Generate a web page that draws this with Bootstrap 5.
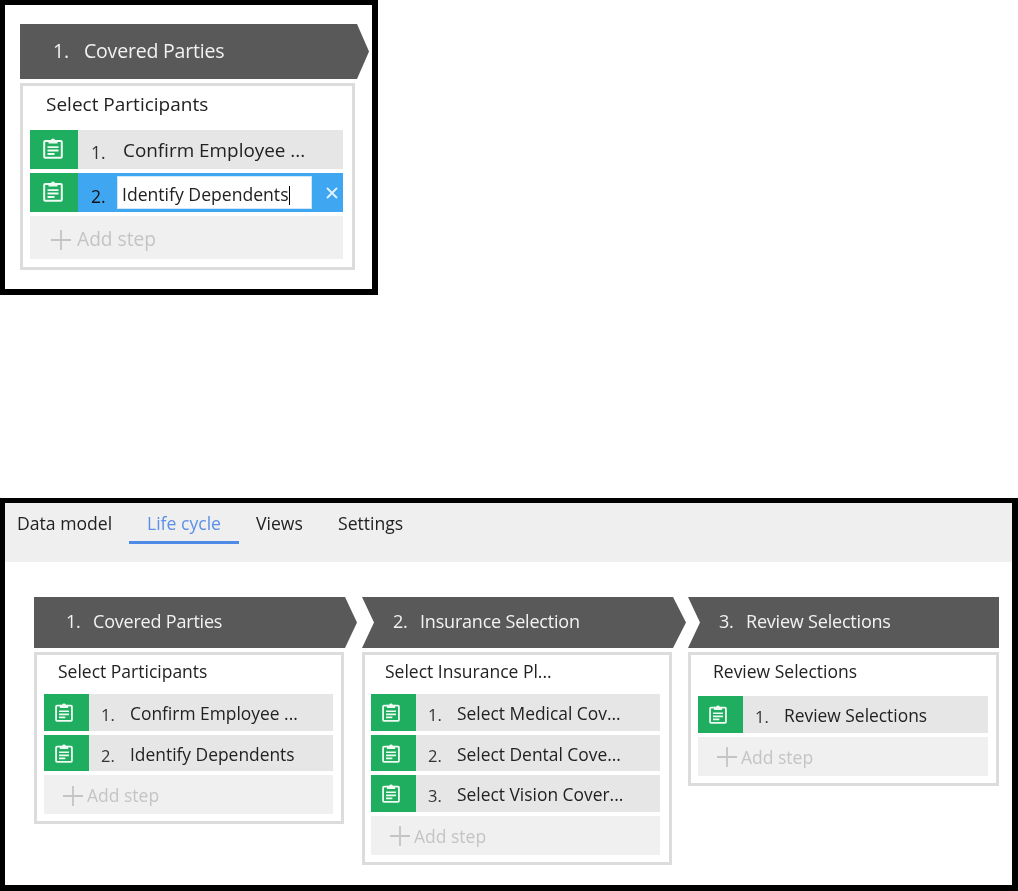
<!DOCTYPE html>
<html lang="en">
<head>
<meta charset="utf-8">
<title>Life cycle</title>
<link href="https://cdn.jsdelivr.net/npm/bootstrap@5.3.0/dist/css/bootstrap.min.css" rel="stylesheet">
<style>
html,body{margin:0;background:#fff;}
body{font-family:"Open Sans","Noto Sans",sans-serif;color:#222;width:1018px;height:891px;overflow:hidden;}
.shot{border-style:solid;border-color:#000;border-width:5px 6px 6px 5px;box-sizing:border-box;background:#fff;filter:blur(.35px);}
.shot-top{width:378px;height:295px;padding:19px 3px 0 15px;margin-bottom:203px;}
.shot-main{width:1018px;height:393px;}
.tabbar{height:59px;background:#efefef;padding-top:7px;padding-left:12px;font-size:17.6px;}
.tabitem{height:34px;line-height:26px;color:#222;}
.tab-a{width:112px;}
.tab-b{width:110px;color:#5b8fe8;border-bottom:3px solid #4f8be6;text-align:center;}
.tab-c{width:99px;padding-left:17px;}
.tab-d{padding-left:0;}
.canvas{padding:35px 0 0 29px;}
.stagecol{flex:none;}
.col-one{width:323px;margin-right:5px;}
.col-two{width:324px;margin-right:2px;}
.col-three{width:311px;}
.stage{height:51px;background:#595959;color:#f2f2f2;font-size:18px;letter-spacing:-.2px;padding-bottom:3px;}
.stage-first{clip-path:polygon(0 0,calc(100% - 12px) 0,100% 50%,calc(100% - 12px) 100%,0 100%);padding-left:32px;}
.stage-mid{clip-path:polygon(0 0,calc(100% - 13px) 0,100% 50%,calc(100% - 13px) 100%,0 100%,12px 50%);padding-left:31px;}
.stage-last{clip-path:polygon(0 0,100% 0,100% 100%,0 100%,12px 50%);padding-left:31px;}
.stage-num{width:27px;flex:none;}
.stepbox{width:310px;margin-top:4px;border:3px solid #dcdcdc;padding:0 8px 7px 7px;background:#fff;}
.col-two .stepbox{padding-left:6px;padding-right:9px;}
.col-three .stepbox{width:311px;}
.boxtitle{height:39px;padding-left:14px;font-size:17.5px;line-height:28px;padding-top:2px;}
.steprow{height:36.5px;background:#e6e6e6;margin-bottom:4px;font-size:17.4px;}
.stepicon{width:45px;flex:none;background:#1fae5f;padding-left:11px;padding-top:8px;}
.stepicon svg{width:18px;height:20px;display:block;}
.stepnum{width:29px;flex:none;margin-left:12px;padding-top:9px;font-size:16.5px;color:#333;line-height:24px;}
.steplabel{white-space:nowrap;padding-top:6px;line-height:26px;}
.addstep{height:39px;margin-top:1px;background:#f0f0f0;color:#c4c4c4;font-size:17.5px;padding-left:19px;padding-top:2px;}
.plusmark{width:20px;height:20px;margin-right:4px;flex:none;}
.third-title{height:41px;padding-left:15px;}
.shot-top .stage{height:55px;font-size:19.5px;width:349px;padding-left:33px;padding-bottom:2px;}
.shot-top .stage-num{width:31px;}
.shot-top .stepbox{width:335px;padding:0 9px 7px 7px;height:187px;}
.shot-top .boxtitle{height:44px;font-size:19px;line-height:30px;padding-left:16px;padding-top:3px;}
.shot-top .steprow{height:39px;font-size:18.9px;margin-bottom:4px;}
.shot-top .stepicon{width:48px;padding-left:13px;padding-top:7px;}
.shot-top .stepicon svg{width:20px;height:22px;}
.shot-top .stepnum{width:32px;margin-left:13px;font-size:17.5px;padding-top:10px;}
.shot-top .steplabel{padding-top:6px;line-height:28px;}
.shot-top .addstep{height:43px;margin-top:0;font-size:19.2px;padding-left:21px;padding-top:4px;}
.shot-top .plusmark{margin-right:6px;}
.steprow-edit{background:#3fa6f2!important;}
.shot-top .editnum{color:#111;width:26px;padding-top:11px;}
.editbox{width:195px;height:33px;background:#fff;border:1px solid #cfe6fb;font-size:17.6px;line-height:35px;padding-left:4px;margin-right:13px;flex:none;}
.caretbar{display:inline-block;width:1px;height:19px;background:#000;vertical-align:-4px;}
.closemark{width:14px;height:14px;flex:none;}
</style>
</head>
<body>
<svg width="0" height="0" class="d-block" aria-hidden="true"><defs>
<symbol id="clip" viewBox="0 0 20 22"><g fill="none" stroke="#eefaf2" stroke-width="2"><path d="M6.500 4H2.200a1 1 0 0 0-1 1v14.800a1 1 0 0 0 1 1h15.600a1 1 0 0 0 1-1V5a1 1 0 0 0-1-1h-4.300"/></g><path d="M5.500 6.500V3h2.400a2.200 2.200 0 0 1 4.200 0h2.400v3.500z" fill="#eefaf2"/><path d="M4.500 9.200h11v1.900h-11zM4.500 12.600h11v1.900h-11zM4.500 16h7v1.900h-7z" fill="#eefaf2"/></symbol>
<symbol id="plus" viewBox="0 0 20 20"><path d="M10 0v20M0 10h20" stroke="#c4c4c4" stroke-width="1.800" fill="none"/></symbol>
</defs></svg>

<div class="shot shot-top">
  <div class="stage stage-first d-flex align-items-center"><span class="stage-num">1.</span><span>Covered Parties</span></div>
  <div class="stepbox">
    <div class="boxtitle">Select Participants</div>
    <div class="steprow d-flex"><div class="stepicon"><svg><use href="#clip"/></svg></div><div class="stepnum">1.</div><div class="steplabel">Confirm Employee ...</div></div>
    <div class="steprow steprow-edit d-flex"><div class="stepicon"><svg><use href="#clip"/></svg></div><div class="stepnum editnum">2.</div><div class="align-self-center editbox">Identify Dependents<span class="caretbar"></span></div><svg class="closemark align-self-center" viewBox="0 0 14 14"><path d="M2 2l10 10M12 2L2 12" stroke="#e4f3fe" stroke-width="1.800"/></svg></div>
    <div class="addstep d-flex align-items-center"><svg class="plusmark"><use href="#plus"/></svg><span>Add step</span></div>
  </div>
</div>

<div class="shot shot-main">
  <div class="tabbar d-flex">
    <div class="tabitem tab-a">Data model</div>
    <div class="tabitem tab-b">Life cycle</div>
    <div class="tabitem tab-c">Views</div>
    <div class="tabitem tab-d">Settings</div>
  </div>
  <div class="canvas d-flex align-items-start">
    <div class="stagecol col-one">
      <div class="stage stage-first d-flex align-items-center"><span class="stage-num">1.</span><span>Covered Parties</span></div>
      <div class="stepbox">
        <div class="boxtitle">Select Participants</div>
        <div class="steprow d-flex"><div class="stepicon"><svg><use href="#clip"/></svg></div><div class="stepnum">1.</div><div class="steplabel">Confirm Employee ...</div></div>
        <div class="steprow d-flex"><div class="stepicon"><svg><use href="#clip"/></svg></div><div class="stepnum">2.</div><div class="steplabel">Identify Dependents</div></div>
        <div class="addstep d-flex align-items-center"><svg class="plusmark"><use href="#plus"/></svg><span>Add step</span></div>
      </div>
    </div>
    <div class="stagecol col-two">
      <div class="stage stage-mid d-flex align-items-center"><span class="stage-num">2.</span><span>Insurance Selection</span></div>
      <div class="stepbox">
        <div class="boxtitle">Select Insurance Pl...</div>
        <div class="steprow d-flex"><div class="stepicon"><svg><use href="#clip"/></svg></div><div class="stepnum">1.</div><div class="steplabel">Select Medical Cov...</div></div>
        <div class="steprow d-flex"><div class="stepicon"><svg><use href="#clip"/></svg></div><div class="stepnum">2.</div><div class="steplabel">Select Dental Cove...</div></div>
        <div class="steprow d-flex"><div class="stepicon"><svg><use href="#clip"/></svg></div><div class="stepnum">3.</div><div class="steplabel">Select Vision Cover...</div></div>
        <div class="addstep d-flex align-items-center"><svg class="plusmark"><use href="#plus"/></svg><span>Add step</span></div>
      </div>
    </div>
    <div class="stagecol col-three">
      <div class="stage stage-last d-flex align-items-center"><span class="stage-num">3.</span><span>Review Selections</span></div>
      <div class="stepbox">
        <div class="boxtitle third-title">Review Selections</div>
        <div class="steprow d-flex"><div class="stepicon"><svg><use href="#clip"/></svg></div><div class="stepnum">1.</div><div class="steplabel">Review Selections</div></div>
        <div class="addstep d-flex align-items-center"><svg class="plusmark"><use href="#plus"/></svg><span>Add step</span></div>
      </div>
    </div>
  </div>
</div>
<script src="https://cdn.jsdelivr.net/npm/bootstrap@5.3.0/dist/js/bootstrap.bundle.min.js"></script>
</body>
</html>
